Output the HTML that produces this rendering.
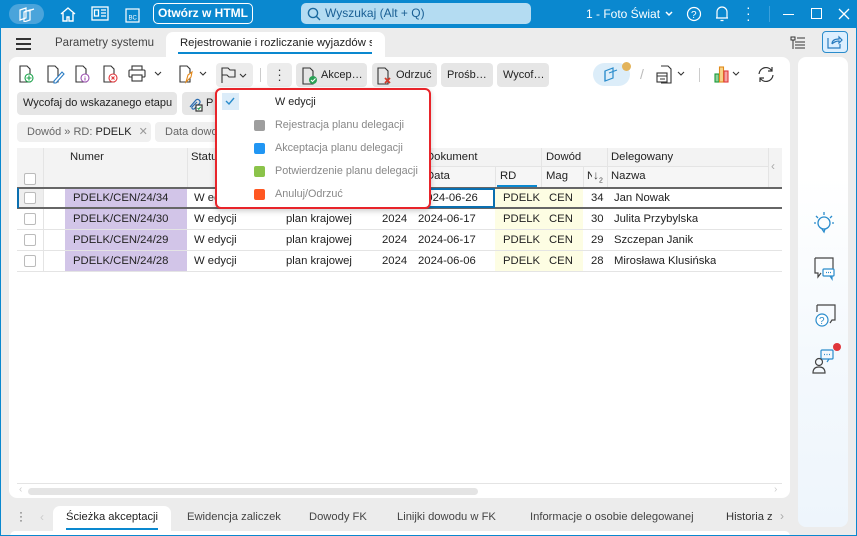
<!DOCTYPE html>
<html><head><meta charset="utf-8"><style>
*{box-sizing:border-box;margin:0;padding:0}
body{width:857px;height:536px;overflow:hidden;background:#ececec;font-family:"Liberation Sans",sans-serif;font-size:12px;color:#222;position:relative}
.a{position:absolute}
.tb{left:0;top:0;width:857px;height:28px;background:#0a88cf}
.wt{color:#fff}
.btn{background:#e6e6e6;border-radius:4px;height:23px;line-height:23px;font-size:11px;color:#222;padding:0 6px;white-space:nowrap;overflow:hidden}
.card{background:#fff;border-radius:8px}
.cell{position:absolute;height:21px;line-height:23px;font-size:11.3px;white-space:nowrap;overflow:hidden}
.cb{position:absolute;width:12px;height:12px;border:1px solid #bbb;border-radius:2px;background:#fff}
.hl{position:absolute;height:1px;background:#e4e4e4}
.vl{position:absolute;width:1px;background:#e4e4e4}
.mi{position:absolute;left:275px;font-size:10.8px;color:#888;white-space:nowrap}
.sq{position:absolute;left:254px;width:11px;height:11px;border-radius:2px}
.bt{position:absolute;top:511px;font-size:11.2px;color:#444}
</style></head><body>
<div class="a" style="left:0;top:0;width:857px;height:536px;border:1px solid #0a88cf;border-top:none"></div>
<div class="a tb"></div>
<div class="a" style="left:9px;top:4px;width:35px;height:20px;border-radius:10px;background:#4aa4db"></div>
<svg class="a" style="left:17px;top:6px" width="20" height="16" viewBox="0 0 20 16" fill="none" stroke="#fff" stroke-width="1.2"><path d="M3 4l6-2v10l-6 2z M7 6l6-2v10l-6 2z M11 5l6-2"/></svg>
<svg class="a" style="left:59px;top:5px" width="18" height="18" viewBox="0 0 18 18" fill="none" stroke="#fff" stroke-width="1.4"><path d="M2 9l7-6 7 6M4 8v8h4v-4h2v4h4V8"/></svg>
<svg class="a" style="left:91px;top:6px" width="18" height="15" viewBox="0 0 18 15" fill="none" stroke="#fff" stroke-width="1.3"><rect x="1" y="1" width="16" height="13"/><rect x="3.5" y="4" width="4" height="6"/><path d="M10 4h5M10 7h5M10 10h5"/></svg>
<svg class="a" style="left:125px;top:8px" width="15" height="15" viewBox="0 0 15 15" fill="none" stroke="#fff" stroke-width="1.2"><rect x="1" y="1" width="13" height="13"/><text x="3.5" y="11.5" font-size="6" fill="#fff" stroke="none" font-family="Liberation Sans">BC</text></svg>
<div class="a wt" style="left:153px;top:3px;width:100px;height:21px;border:1.5px solid #fff;border-radius:5px;text-align:center;line-height:18px;font-weight:bold;font-size:12px">Otwórz w HTML</div>
<div class="a" style="left:301px;top:3px;width:230px;height:21px;border-radius:5px;background:#b4dcf2"></div>
<svg class="a" style="left:307px;top:7px" width="14" height="14" viewBox="0 0 14 14" fill="none" stroke="#1a6aa0" stroke-width="1.4"><circle cx="6" cy="6" r="4.6"/><path d="M9.5 9.5l3.5 3.5"/></svg>
<div class="a" style="left:325px;top:6px;font-size:12px;color:#1a5f94">Wyszukaj (Alt + Q)</div>
<div class="a wt" style="left:586px;top:7px;font-size:12px">1 - Foto Świat</div>
<svg class="a" style="left:664px;top:10px" width="10" height="8" viewBox="0 0 10 8" fill="none" stroke="#fff" stroke-width="1.5"><path d="M2 2l3 3 3-3"/></svg>
<svg class="a" style="left:686px;top:6px" width="16" height="16" viewBox="0 0 16 16" fill="none" stroke="#fff" stroke-width="1.2"><circle cx="8" cy="8" r="6.5"/><text x="5" y="12" font-size="10" fill="#fff" stroke="none" font-family="Liberation Sans">?</text></svg>
<svg class="a" style="left:714px;top:5px" width="16" height="18" viewBox="0 0 16 18" fill="none" stroke="#fff" stroke-width="1.2"><path d="M3 13V7a5 5 0 0110 0v6zM2 13h12M6.5 15.5h3"/></svg>
<div class="a wt" style="left:746px;top:4px;font-size:14px;line-height:6px">·<br>·<br>·</div>
<div class="a" style="left:769px;top:6px;width:1px;height:16px;background:#3aa0dc"></div>
<div class="a" style="left:783px;top:14px;width:11px;height:1.3px;background:#fff"></div>
<div class="a" style="left:811px;top:8px;width:11px;height:11px;border:1.3px solid #fff"></div>
<svg class="a" style="left:838px;top:8px" width="12" height="12" viewBox="0 0 12 12" stroke="#fff" stroke-width="1.3"><path d="M1 1l10 10M11 1L1 11"/></svg>

<div class="a" style="left:16px;top:38px;width:15px;height:2px;background:#333;box-shadow:0 5px 0 #333,0 10px 0 #333"></div>
<div class="a" style="left:55px;top:37px;font-size:11.5px;color:#444">Parametry systemu</div>
<div class="a" style="left:166px;top:32px;width:219px;height:26px;background:#fff;border-radius:7px 7px 0 0"></div>
<div class="a" style="left:180px;top:37px;font-size:11.3px;color:#222;width:192px;overflow:hidden;white-space:nowrap">Rejestrowanie i rozliczanie wyjazdów s</div>
<div class="a" style="left:178px;top:52px;width:194px;height:2px;background:#0a88cf"></div>
<svg class="a" style="left:790px;top:36px" width="16" height="15" viewBox="0 0 16 15" fill="none" stroke="#333" stroke-width="1"><path d="M1 1h4v3H1zM7 2h8M3 4v9M5 6h10M5 9h10M5 12h10"/></svg>
<div class="a" style="left:822px;top:31px;width:26px;height:22px;border:1.3px solid #2a8ccc;border-radius:4px;background:#dcefff"></div>
<svg class="a" style="left:827px;top:35px" width="16" height="14" viewBox="0 0 16 14" fill="none" stroke="#2a7cbf" stroke-width="1.2"><path d="M1 3v10h12V9M5 9c0-4 3-5 7-5V2l3 3-3 3V6c-3 0-5 1-7 3"/></svg>

<div class="a card" style="left:9px;top:57px;width:781px;height:441px"></div>
<div class="a card" style="left:798px;top:57px;width:50px;height:470px;background:linear-gradient(#fff 0,#fff 120px,#f4f9fd 300px,#eef5fc)"></div>

<svg class="a" style="left:18px;top:64px" width="140" height="20" viewBox="0 0 140 20" fill="none" stroke-width="1.1">
<g stroke="#333"><path d="M2 2h7l3 3v13H2z"/><path d="M30 2h7l3 3v13H30z"/><path d="M58 2h7l3 3v13H58z"/><path d="M86 2h7l3 3v13H86z"/></g>
<circle cx="11" cy="14" r="4" stroke="#1aa34a" fill="#fff"/><path d="M11 11.5v5M8.5 14h5" stroke="#1aa34a"/>
<path d="M36 17l8-9 2 2-8 9h-2z" stroke="#2a7cc4" fill="#fff"/>
<circle cx="67" cy="14" r="4" stroke="#9b4fb0" fill="#fff"/><path d="M67 12v.5M67 13.5v3" stroke="#9b4fb0"/>
<circle cx="95" cy="14" r="4" stroke="#e0353a" fill="#fff"/><path d="M93.5 12.5l3 3M96.5 12.5l-3 3" stroke="#e0353a"/>
<g stroke="#333"><rect x="114" y="2" width="10" height="4"/><rect x="111" y="6" width="16" height="7" rx="1"/><rect x="114" y="11" width="10" height="6" fill="#fff"/></g>
</svg>
<svg class="a" style="left:153px;top:70px" width="12" height="8" viewBox="0 0 12 8" fill="none" stroke="#333" stroke-width="1.1"><path d="M2 2l3 3 3-3"/></svg>
<svg class="a" style="left:178px;top:64px" width="32" height="20" viewBox="0 0 32 20" fill="none" stroke-width="1.1"><path d="M2 2h7l3 3v13H2z" stroke="#333"/><path d="M8 18l2-7 4-3-1 5z" stroke="#e48a1c" fill="#fff"/><path d="M22 8l3 3 3-3" stroke="#333"/></svg>
<div class="a" style="left:216px;top:63px;width:37px;height:24px;background:#ececec;border-radius:4px"></div>
<svg class="a" style="left:220px;top:66px" width="32" height="18" viewBox="0 0 32 18" fill="none" stroke="#333" stroke-width="1.1"><path d="M2 17V2h6l2 2h5v7H9l-2-2H2"/><path d="M20 8l3 3 3-3"/></svg>
<div class="a" style="left:260px;top:68px;width:1px;height:14px;background:#ccc"></div>
<div class="a" style="left:267px;top:63px;width:25px;height:24px;background:#ececec;border-radius:4px;text-align:center;font-size:13px;line-height:5px;padding-top:4px;color:#333">·<br>·<br>·</div>
<div class="a btn" style="left:296px;top:63px;width:71px;height:24px;padding-left:25px;line-height:24px">Akcep…</div>
<svg class="a" style="left:301px;top:66px" width="20" height="19" viewBox="0 0 20 19" fill="none" stroke-width="1.1"><path d="M2 2h7l3 3v13H2z" stroke="#333"/><circle cx="12" cy="14" r="4" fill="#2aa055"/><path d="M10 14l1.5 1.5 3-3" stroke="#fff"/></svg>
<div class="a btn" style="left:372px;top:63px;width:65px;height:24px;padding-left:24px;line-height:24px">Odrzuć</div>
<svg class="a" style="left:376px;top:66px" width="20" height="19" viewBox="0 0 20 19" fill="none" stroke-width="1.1"><path d="M2 2h7l3 3v13H2z" stroke="#333"/><path d="M9 12l5 5M14 12l-5 5" stroke="#d23a2a" stroke-width="1.8"/></svg>
<div class="a btn" style="left:441px;top:63px;width:52px;height:24px;line-height:24px">Prośb…</div>
<div class="a btn" style="left:497px;top:63px;width:52px;height:24px;line-height:24px">Wycof…</div>
<div class="a" style="left:593px;top:63px;width:37px;height:23px;border-radius:12px;background:#dcedf9"></div>
<div class="a" style="left:622px;top:62px;width:9px;height:9px;border-radius:50%;background:#e3b35a"></div>
<svg class="a" style="left:603px;top:66px" width="18" height="17" viewBox="0 0 18 17" fill="none" stroke="#2a8ccc" stroke-width="1.2"><path d="M2 5l8-3v10l-8 3zM6 7l8-3"/><path d="M2 5v10"/></svg>
<div class="a" style="left:640px;top:66px;color:#bbb;font-size:14px">/</div>
<svg class="a" style="left:655px;top:64px" width="32" height="20" viewBox="0 0 32 20" fill="none" stroke="#333" stroke-width="1.1"><path d="M6 2h7l3 3v14H6"/><rect x="2" y="9" width="10" height="9"/><path d="M2 12h10M5 15h5"/><path d="M23 8l3 3 3-3"/></svg>
<div class="a" style="left:699px;top:68px;width:1px;height:14px;background:#ccc"></div>
<svg class="a" style="left:713px;top:64px" width="30" height="20" viewBox="0 0 30 20" fill="none" stroke-width="1.1"><rect x="2" y="10" width="4" height="8" fill="#8fd19a" stroke="#1a9a3a"/><rect x="6.5" y="3" width="4" height="15" fill="#f7d48a" stroke="#e08a1a"/><rect x="11" y="7" width="4" height="11" fill="#f5a3a3" stroke="#e03a3a"/><path d="M20 8l3 3 3-3" stroke="#333"/></svg>
<svg class="a" style="left:756px;top:65px" width="20" height="19" viewBox="0 0 20 19" fill="none" stroke="#333" stroke-width="1.2"><path d="M3 9a7 7 0 0113-3M17 10a7 7 0 01-13 3"/><path d="M16 2v4h-4M4 17v-4h4"/></svg>

<div class="a btn" style="left:17px;top:92px;width:160px;height:23px">Wycofaj do wskazanego etapu</div>
<div class="a btn" style="left:182px;top:92px;width:40px;height:23px;padding-left:24px">P</div>
<svg class="a" style="left:187px;top:95px" width="18" height="18" viewBox="0 0 18 18" fill="none" stroke="#2a6cb0" stroke-width="1.2"><path d="M3 12l6-7a2.5 2.5 0 013.5 3.5L7 14a1.5 1.5 0 01-2-2l5-5"/><rect x="9" y="10" width="6" height="6" stroke="#333" fill="#fff"/><path d="M10.5 13l1.2 1.2 2-2.5" stroke="#2aa055"/></svg>

<div class="a" style="left:17px;top:122px;width:134px;height:20px;background:#f0f0f0;border-radius:4px;font-size:11px;line-height:20px;padding-left:10px;color:#666;white-space:nowrap">Dowód » RD: <span style="color:#222">PDELK</span> <span style="color:#999;margin-left:4px">✕</span></div>
<div class="a" style="left:155px;top:122px;width:70px;height:20px;background:#f0f0f0;border-radius:4px;font-size:11px;line-height:20px;padding-left:10px;color:#666;overflow:hidden;white-space:nowrap">Data dowodu</div>

<div class="a" style="left:17px;top:148px;width:765px;height:40px;background:#f3f3f3"></div>
<div class="a" style="left:413px;top:166px;width:355px;height:21px;background:#f6f6f6"></div>
<div class="hl" style="left:413px;top:166px;width:355px"></div>
<div class="vl" style="left:43px;top:148px;height:40px"></div>
<div class="vl" style="left:187px;top:148px;height:40px"></div>
<div class="vl" style="left:495px;top:166px;height:22px"></div>
<div class="vl" style="left:541px;top:148px;height:40px"></div>
<div class="vl" style="left:583px;top:166px;height:22px"></div>
<div class="vl" style="left:607px;top:148px;height:40px"></div>
<div class="vl" style="left:768px;top:148px;height:40px"></div>
<div class="a" style="left:497px;top:185px;width:40px;height:3px;background:#0a88cf"></div>
<div class="cb" style="left:24px;top:173px"></div>
<div class="a" style="left:70px;top:151px;font-size:11.3px">Numer</div>
<div class="a" style="left:191px;top:151px;font-size:11.3px">Status</div>
<div class="a" style="left:426px;top:151px;font-size:11.3px">Dokument</div>
<div class="a" style="left:426px;top:170px;font-size:11.3px">Data</div>
<div class="a" style="left:500px;top:170px;font-size:11.3px">RD</div>
<div class="a" style="left:546px;top:151px;font-size:11.3px">Dowód</div>
<div class="a" style="left:546px;top:170px;font-size:11.3px">Mag</div>
<div class="a" style="left:587px;top:170px;font-size:11.3px;width:5px;overflow:hidden">N</div>
<div class="a" style="left:593px;top:168px;font-size:12px;color:#444">↓<sub style="font-size:7px">2</sub></div>
<div class="a" style="left:611px;top:151px;font-size:11.3px">Delegowany</div>
<div class="a" style="left:611px;top:170px;font-size:11.3px">Nazwa</div>
<div class="a" style="left:771px;top:159px;color:#aaa;font-size:12px">‹</div>

<div class="a" style="left:65px;top:188px;width:122px;height:83px;background:#d2c5e8"></div>
<div class="a" style="left:495px;top:188px;width:88px;height:83px;background:#fdfde3"></div>
<div class="a" style="left:17px;top:188px;width:26px;height:20px;background:#eee"></div>
<div class="hl" style="left:17px;top:229px;width:765px"></div>
<div class="hl" style="left:17px;top:250px;width:765px"></div>
<div class="hl" style="left:17px;top:271px;width:765px"></div>
<div class="vl" style="left:43px;top:188px;height:83px"></div>
<div class="a" style="left:17px;top:187px;width:765px;height:2px;background:#666"></div>
<div class="a" style="left:17px;top:207px;width:765px;height:2px;background:#666"></div>
<div class="a" style="left:17px;top:188px;width:2px;height:20px;background:#0a6fb0"></div>
<div class="a" style="left:413px;top:188px;width:82px;height:20px;border:2px solid #0a6fb0"></div>

<div class="cb" style="left:24px;top:192px"></div>
<div class="cb" style="left:24px;top:213px"></div>
<div class="cb" style="left:24px;top:234px"></div>
<div class="cb" style="left:24px;top:255px"></div>

<div class="cell" style="left:73px;top:187px">PDELK/CEN/24/34</div>
<div class="cell" style="left:194px;top:187px">W edycji</div>
<div class="cell" style="left:420px;top:187px">2024-06-26</div>
<div class="cell" style="left:503px;top:187px">PDELK</div>
<div class="cell" style="left:549px;top:187px">CEN</div>
<div class="cell" style="left:591px;top:187px">34</div>
<div class="cell" style="left:614px;top:187px">Jan Nowak</div>

<div class="cell" style="left:73px;top:208px">PDELK/CEN/24/30</div>
<div class="cell" style="left:194px;top:208px">W edycji</div>
<div class="cell" style="left:286px;top:208px">plan krajowej</div>
<div class="cell" style="left:382px;top:208px">2024</div>
<div class="cell" style="left:418px;top:208px">2024-06-17</div>
<div class="cell" style="left:503px;top:208px">PDELK</div>
<div class="cell" style="left:549px;top:208px">CEN</div>
<div class="cell" style="left:591px;top:208px">30</div>
<div class="cell" style="left:614px;top:208px">Julita Przybylska</div>

<div class="cell" style="left:73px;top:229px">PDELK/CEN/24/29</div>
<div class="cell" style="left:194px;top:229px">W edycji</div>
<div class="cell" style="left:286px;top:229px">plan krajowej</div>
<div class="cell" style="left:382px;top:229px">2024</div>
<div class="cell" style="left:418px;top:229px">2024-06-17</div>
<div class="cell" style="left:503px;top:229px">PDELK</div>
<div class="cell" style="left:549px;top:229px">CEN</div>
<div class="cell" style="left:591px;top:229px">29</div>
<div class="cell" style="left:614px;top:229px">Szczepan Janik</div>

<div class="cell" style="left:73px;top:250px">PDELK/CEN/24/28</div>
<div class="cell" style="left:194px;top:250px">W edycji</div>
<div class="cell" style="left:286px;top:250px">plan krajowej</div>
<div class="cell" style="left:382px;top:250px">2024</div>
<div class="cell" style="left:418px;top:250px">2024-06-06</div>
<div class="cell" style="left:503px;top:250px">PDELK</div>
<div class="cell" style="left:549px;top:250px">CEN</div>
<div class="cell" style="left:591px;top:250px">28</div>
<div class="cell" style="left:614px;top:250px">Mirosława Klusińska</div>

<div class="a" style="left:215px;top:88px;width:216px;height:121px;background:#fff;border:2px solid #e8242a;border-radius:6px;box-shadow:0 2px 6px rgba(0,0,0,.2)"></div>
<div class="a" style="left:222px;top:93px;width:17px;height:17px;background:#dcecf9"></div>
<svg class="a" style="left:224px;top:96px" width="12" height="10" viewBox="0 0 12 10" fill="none" stroke="#2a8ccc" stroke-width="1.4"><path d="M2 5l3 3 5-6"/></svg>
<div class="mi" style="top:96px;color:#222">W edycji</div>
<div class="sq" style="top:120px;background:#9e9e9e"></div><div class="mi" style="top:119px">Rejestracja planu delegacji</div>
<div class="sq" style="top:143px;background:#2196f3"></div><div class="mi" style="top:142px">Akceptacja planu delegacji</div>
<div class="sq" style="top:166px;background:#8bc34a"></div><div class="mi" style="top:165px">Potwierdzenie planu delegacji</div>
<div class="sq" style="top:189px;background:#ff5722"></div><div class="mi" style="top:188px">Anuluj/Odrzuć</div>

<div class="hl" style="left:17px;top:483px;width:765px"></div>
<div class="a" style="left:28px;top:488px;width:450px;height:7px;border-radius:4px;background:#e4e4e4"></div>
<div class="a" style="left:19px;top:484px;color:#ccc;font-size:10px">‹</div>
<div class="a" style="left:774px;top:484px;color:#ccc;font-size:10px">›</div>

<svg class="a" style="left:812px;top:210px" width="24" height="24" viewBox="0 0 24 24" fill="none" stroke="#2a8ccc" stroke-width="1.3"><circle cx="12" cy="13" r="6"/><path d="M10 19l2 3 1-3M12 2v3M4 6l2 2M20 6l-2 2M2 13h2M20 13h2"/></svg>
<svg class="a" style="left:811px;top:256px" width="26" height="26" viewBox="0 0 26 26" fill="none" stroke-width="1.2"><path d="M4 2h18v12M4 2v15h3v4l3-4" stroke="#444"/><rect x="12" y="13" width="11" height="7" rx="1" stroke="#2a8ccc" fill="#fff"/><path d="M15 16.5h1M17 16.5h1M19 16.5h1" stroke="#2a8ccc"/><path d="M19 20l2 3v-3" stroke="#2a8ccc"/></svg>
<svg class="a" style="left:811px;top:303px" width="26" height="26" viewBox="0 0 26 26" fill="none" stroke-width="1.2"><path d="M6 2h18v15h-3l-2 3" stroke="#444"/><path d="M6 2v7" stroke="#444"/><circle cx="11" cy="17" r="6" stroke="#2a8ccc" fill="#fff"/><text x="8" y="21" font-size="10" fill="#2a8ccc" font-family="Liberation Sans">?</text></svg>
<div class="a" style="left:833px;top:343px;width:8px;height:8px;border-radius:50%;background:#e0353a"></div>
<svg class="a" style="left:811px;top:348px" width="26" height="26" viewBox="0 0 26 26" fill="none" stroke-width="1.2"><rect x="10" y="2" width="12" height="9" rx="1" stroke="#2a8ccc"/><path d="M13 6.5h1M15.5 6.5h1M18 6.5h1M18 11l-2 3" stroke="#2a8ccc"/><circle cx="8" cy="14" r="3.5" stroke="#444"/><path d="M2 25c0-4 2-6 6-6s6 2 6 6z" stroke="#444"/></svg>

<div class="a" style="left:19px;top:510px;font-size:12px;line-height:4px;color:#555">·<br>·<br>·</div>
<div class="a" style="left:40px;top:510px;color:#ccc">‹</div>
<div class="a" style="left:53px;top:506px;width:118px;height:26px;background:#fff;border-radius:7px 7px 0 0"></div>
<div class="bt" style="left:66px;color:#222">Ścieżka akceptacji</div>
<div class="a" style="left:66px;top:528px;width:92px;height:2px;background:#0a88cf"></div>
<div class="bt" style="left:187px">Ewidencja zaliczek</div>
<div class="bt" style="left:309px">Dowody FK</div>
<div class="bt" style="left:397px">Linijki dowodu w FK</div>
<div class="bt" style="left:530px">Informacje o osobie delegowanej</div>
<div class="bt" style="left:726px;color:#333">Historia z</div>
<div class="a" style="left:780px;top:509px;color:#aaa">›</div>
<div class="a" style="left:10px;top:531px;width:780px;height:5px;background:#fff;border-radius:6px 6px 0 0"></div>
<div class="a" style="left:0;top:535px;width:857px;height:1px;background:#0a88cf"></div>
</body></html>
